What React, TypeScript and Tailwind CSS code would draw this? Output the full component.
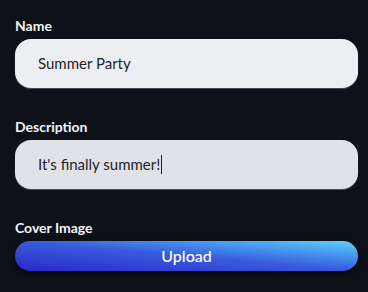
import { FC } from "react";

const Label: FC<{ text: string }> = ({ text }) => (
    <label className="block text-[14px] leading-[20px] font-bold text-[#f3f4f6] mb-[3px]">
        {text}
    </label>
);

const App: FC = () => {
    return (
        <div
            className="w-[368px] h-[292px] bg-[#0e1118] pt-[16px] px-[15px] pr-[10px]"
            style={{ fontFamily: "Lato, 'Open Sans', sans-serif" }}
        >
            {/* Name */}
            <Label text="Name" />
            <div className="h-[49px] rounded-[16px] bg-[#eceef2] flex items-center pl-[23px] text-[15px] text-[#1f2329] shadow-[0_1px_1px_rgba(120,120,130,0.6)]">
                Summer Party
            </div>

            {/* Description */}
            <div className="mt-[29px]">
                <Label text="Description" />
                <div className="h-[49px] rounded-[16px] bg-[#dfe2e7] flex items-center pl-[23px] text-[15px] text-[#1f2329] shadow-[0_1px_1px_rgba(120,120,130,0.6)]">
                    It's finally summer!
                    <span className="inline-block w-px h-[19px] bg-[#1f2329] ml-px" />
                </div>
            </div>

            {/* Cover Image */}
            <div className="mt-[29px]">
                <Label text="Cover Image" />
                <button className="w-full h-[30px] rounded-full bg-linear-to-tr from-[#2a24c8] via-[#3a5ade] to-[#5fd2fb] text-white text-[16px] font-medium shadow-[0_3px_6px_rgba(0,0,0,0.6)]">
                    Upload
                </button>
            </div>
        </div>
    );
};

export default App;
